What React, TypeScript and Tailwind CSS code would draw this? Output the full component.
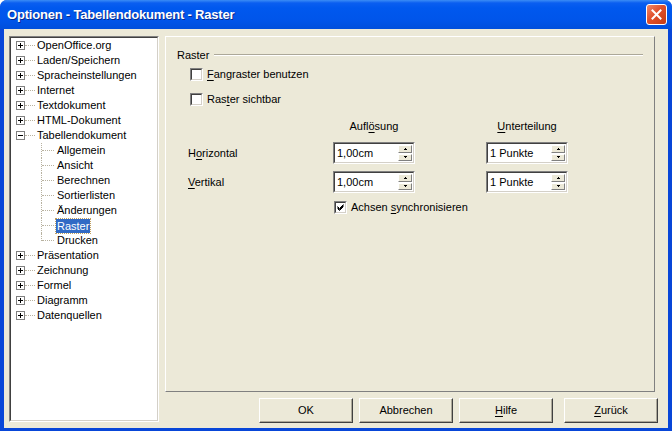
import React from "react"

const sunkenOuter = "border border-t-[#808080] border-l-[#808080] border-b-white border-r-white"
const sunkenInner = "border border-t-[#404040] border-l-[#404040] border-b-[#d4d0c8] border-r-[#d4d0c8]"

function U({ children }: { children: React.ReactNode }) {
  return <span className="underline underline-offset-[2px]">{children}</span>
}

function PlusBox({ open }: { open?: boolean }) {
  return (
    <svg width="9" height="9" viewBox="0 0 9 9" className="relative z-10 block">
      <rect x="0.5" y="0.5" width="8" height="8" fill="white" stroke="#808080" />
      <line x1="2" y1="4.5" x2="7" y2="4.5" stroke="black" />
      {!open && <line x1="4.5" y1="2" x2="4.5" y2="7" stroke="black" />}
    </svg>
  )
}

const roots = [
  "OpenOffice.org",
  "Laden/Speichern",
  "Spracheinstellungen",
  "Internet",
  "Textdokument",
  "HTML-Dokument",
  "Tabellendokument",
  "Präsentation",
  "Zeichnung",
  "Formel",
  "Diagramm",
  "Datenquellen",
]

const children = ["Allgemein", "Ansicht", "Berechnen", "Sortierlisten", "Änderungen", "Raster", "Drucken"]

function RootRow({ label, open }: { label: string; open?: boolean }) {
  return (
    <div className="flex h-[15px] items-center">
      <div className="flex h-full w-[14px] items-center pl-[5px]">
        <PlusBox open={open} />
      </div>
      <div className="w-[10px] border-t border-dotted border-[#b8b2a0]" />
      <span className="ml-[2px] whitespace-nowrap">{label}</span>
    </div>
  )
}

function ChildRow({ label, last, selected }: { label: string; last?: boolean; selected?: boolean }) {
  return (
    <div className="flex h-[15px] items-center">
      <div className="h-full w-[30px]" />
      <div className="relative flex h-full w-[14px] items-center">
        <div className={`absolute left-0 top-0 border-l border-dotted border-[#b8b2a0] ${last ? "h-[8px]" : "bottom-0"}`} />
        <div className="ml-[1px] w-[12px] border-t border-dotted border-[#b8b2a0]" />
      </div>
      {selected ? (
        <span className="ml-[1px] whitespace-nowrap bg-[#316ac5] px-[1px] leading-[14px] text-white outline outline-1 outline-dotted outline-[#c0a060]">
          {label}
        </span>
      ) : (
        <span className="ml-[2px] whitespace-nowrap">{label}</span>
      )}
    </div>
  )
}

function Tree() {
  return (
    <div className={`mb-[1px] w-[150px] ${sunkenOuter}`}>
      <div className={`h-full bg-white ${sunkenInner}`}>
        {roots.map((r) => (
          <React.Fragment key={r}>
            <RootRow label={r} open={r === "Tabellendokument"} />
            {r === "Tabellendokument" &&
              children.map((c, j) => (
                <ChildRow key={c} label={c} last={j === children.length - 1} selected={c === "Raster"} />
              ))}
          </React.Fragment>
        ))}
      </div>
    </div>
  )
}

function CheckBox({ checked }: { checked?: boolean }) {
  return (
    <div className={`h-[13px] w-[13px] shrink-0 ${sunkenOuter}`}>
      <div className={`h-full w-full bg-white ${sunkenInner}`}>
        {checked && (
          <svg width="9" height="9" viewBox="0 0 9 9" className="block">
            <path d="M1.5 3.5 L3.5 5.5 L7.5 1.5 M1.5 4.5 L3.5 6.5 L7.5 2.5 M1.5 5.5 L3.5 7.5 L7.5 3.5" stroke="black" fill="none" strokeWidth="1" />
          </svg>
        )}
      </div>
    </div>
  )
}

function SpinButton({ up }: { up?: boolean }) {
  return (
    <div className="flex flex-1 items-center justify-center border border-t-white border-l-white border-b-[#808080] border-r-[#808080] bg-[#ece9d8]">
      <svg width="3" height="2" viewBox="0 0 3 2" className="block">
        {up ? <path d="M1 0 H2 V1 H3 V2 H0 V1 H1 Z" fill="black" /> : <path d="M0 0 H3 V1 H2 V2 H1 V1 H0 Z" fill="black" />}
      </svg>
    </div>
  )
}

function Spin({ value }: { value: string }) {
  return (
    <div className={`h-[22px] w-[82px] ${sunkenOuter}`}>
      <div className={`flex h-full bg-white ${sunkenInner}`}>
        <span className="flex-1 pl-[2px] leading-[18px]">{value}</span>
        <div className="flex w-[15px] flex-col gap-[1px] py-[1px] pr-[1px]">
          <SpinButton up />
          <SpinButton />
        </div>
      </div>
    </div>
  )
}

function Button({ children, className = "" }: { children: React.ReactNode; className?: string }) {
  return (
    <div
      className={`flex h-[25px] w-[94px] items-center justify-center border border-t-white border-l-white border-b-[#404040] border-r-[#404040] shadow-[inset_-1px_-1px_#aca899] ${className}`}
    >
      {children}
    </div>
  )
}

function Panel() {
  return (
    <div className="mr-[3px] flex flex-1 flex-col border border-t-white border-l-white border-b-[#808080] border-r-[#808080] px-[11px] pt-[11px]">
      <div className="flex h-[14px] items-center">
        <span>Raster</span>
        <div className="ml-[5px] flex-1 border-t border-b border-t-[#aca899] border-b-white" />
      </div>
      <div className="mt-[6px] flex h-[13px] items-center pl-[13px]">
        <CheckBox />
        <span className="ml-[4px]">
          <U>F</U>angraster benutzen
        </span>
      </div>
      <div className="mt-[12px] flex h-[13px] items-center pl-[13px]">
        <CheckBox />
        <span className="ml-[4px]">
          Ras<U>t</U>er sichtbar
        </span>
      </div>
      <div className="ml-[11px] mt-[13px] grid grid-cols-[145px_82px_71px_82px]">
        <div className="h-[14px]" />
        <div className="flex h-[14px] items-center justify-center">
          <span>
            Aufl<U>ö</U>sung
          </span>
        </div>
        <div />
        <div className="flex h-[14px] items-center justify-center">
          <span>
            <U>U</U>nterteilung
          </span>
        </div>

        <div className="mt-[9px] flex items-center">
          <span>
            H<U>o</U>rizontal
          </span>
        </div>
        <div className="mt-[9px]">
          <Spin value="1,00cm" />
        </div>
        <div />
        <div className="mt-[9px]">
          <Spin value="1 Punkte" />
        </div>

        <div className="mt-[7px] flex items-center">
          <span>
            <U>V</U>ertikal
          </span>
        </div>
        <div className="mt-[7px]">
          <Spin value="1,00cm" />
        </div>
        <div />
        <div className="mt-[7px]">
          <Spin value="1 Punkte" />
        </div>
      </div>
      <div className="ml-[157px] mt-[8px] flex h-[13px] items-center">
        <CheckBox checked />
        <span className="ml-[4px]">
          Achsen <U>s</U>ynchronisieren
        </span>
      </div>
    </div>
  )
}

export default function App() {
  return (
    <div className="flex h-[431px] w-[672px] flex-col overflow-hidden rounded-t-[7px] bg-[#0846d8] font-['Liberation_Sans',Arial,sans-serif] text-[11px] text-black">
      <div className="flex h-[29px] shrink-0 items-center bg-[linear-gradient(to_bottom,#3b8cf5_0px,#0a5ef0_3px,#0058ee_8px,#0055ea_20px,#004fdc_29px)] pl-[7px] pr-[5px]">
        <span className="flex-1 text-[13px] font-bold tracking-[-0.2px] text-white [text-shadow:1px_1px_#0a2a8a]">
          Optionen - Tabellendokument - Raster
        </span>
        <div className="flex h-[21px] w-[21px] items-center justify-center rounded-[3px] border border-white bg-[linear-gradient(to_bottom_right,#f08a6a,#e0502c_45%,#c43c14)]">
          <svg width="11" height="11" viewBox="0 0 11 11" className="block">
            <path d="M1.5 1.5 L9.5 9.5 M9.5 1.5 L1.5 9.5" stroke="white" strokeWidth="2" strokeLinecap="square" />
          </svg>
        </div>
      </div>
      <div className="mx-[4px] mb-[3px] flex flex-1 gap-[6px] bg-[#ece9d8] pb-[5px] pl-[5px] pr-[10px] pt-[7px]">
        <Tree />
        <div className="flex flex-1 flex-col">
          <Panel />
          <div className="mt-[6px] flex justify-end">
            <Button>OK</Button>
            <Button className="ml-[6px]">Abbrechen</Button>
            <Button className="ml-[6px]">
              <U>H</U>ilfe
            </Button>
            <Button className="ml-[11px]">
              <U>Z</U>urück
            </Button>
          </div>
        </div>
      </div>
    </div>
  )
}
